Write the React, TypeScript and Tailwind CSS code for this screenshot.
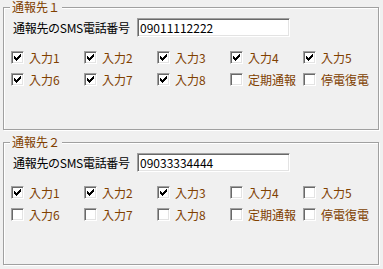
import React from "react";

interface Group {
  title: string;
  phone: string;
  checks: boolean[];
}

const labels = ["入力1", "入力2", "入力3", "入力4", "入力5", "入力6", "入力7", "入力8", "定期通報", "停電復電"];

const groups: Group[] = [
  {
    title: "通報先１",
    phone: "09011112222",
    checks: [true, true, true, true, true, true, true, true, false, false],
  },
  {
    title: "通報先２",
    phone: "09033334444",
    checks: [true, true, true, false, false, false, false, false, false, false],
  },
];

function CheckMark() {
  // classic 7x7 pixel tick
  return (
    <svg width="7" height="7" viewBox="0 0 7 7" shapeRendering="crispEdges" className="block">
      <path
        d="M6 0h1v3h-1zM5 1h1v3h-1zM4 2h1v3h-1zM0 2h1v3h-1zM1 3h1v3h-1zM2 4h1v3h-1zM3 3h1v3h-1z"
        fill="#000"
      />
    </svg>
  );
}

function CheckBox({ checked, label }: { checked: boolean; label: string }) {
  return (
    <div className="flex items-center h-[13px]">
      <div className="w-[13px] h-[13px] shrink-0 border border-t-[#a0a0a0] border-l-[#a0a0a0] border-b-white border-r-white bg-white shadow-[inset_1px_1px_0_#696969,inset_-1px_-1px_0_#e3e3e3] flex items-center justify-center">
        {checked && <CheckMark />}
      </div>
      <span className="ml-[5px] text-[12px] leading-[15px] text-[#804000] whitespace-nowrap">{label}</span>
    </div>
  );
}

function GroupBox({ group }: { group: Group }) {
  return (
    <div className="relative h-[123px] border border-[#a0a0a0] shadow-[inset_1px_1px_0_#fff,1px_1px_0_#fff]">
      <span className="absolute left-[6px] top-[-8px] px-[2px] bg-[#f0f0f0] text-[12px] leading-[14px] text-[#804000]">
        {group.title}
      </span>
      <div className="pt-[10px] pl-[7px]">
        <div className="flex items-center">
          <span className="w-[126px] pl-[2px] text-[12px] leading-[15px] text-black whitespace-nowrap tracking-[-0.3px]">
            通報先のSMS電話番号
          </span>
          <div className="w-[153px] h-[19px] border border-t-[#a0a0a0] border-l-[#a0a0a0] border-b-white border-r-white bg-white shadow-[inset_1px_1px_0_#696969,inset_-1px_-1px_0_#e3e3e3] flex items-center pl-[2px] text-[12px] leading-[15px] text-black">
            {group.phone}
          </div>
        </div>
        <div className="mt-[14px] grid grid-cols-[repeat(5,73px)] gap-y-[9px]">
          {labels.map((l, i) => (
            <CheckBox key={l} checked={group.checks[i]} label={l} />
          ))}
        </div>
      </div>
    </div>
  );
}

export default function App() {
  return (
    <div className="w-[383px] h-[269px] bg-[#f0f0f0] font-['Noto_Sans_CJK_JP',sans-serif] pt-[7px] pl-[3px] pr-[4px] flex flex-col gap-[12px]">
      {groups.map((g) => (
        <GroupBox key={g.title} group={g} />
      ))}
    </div>
  );
}
